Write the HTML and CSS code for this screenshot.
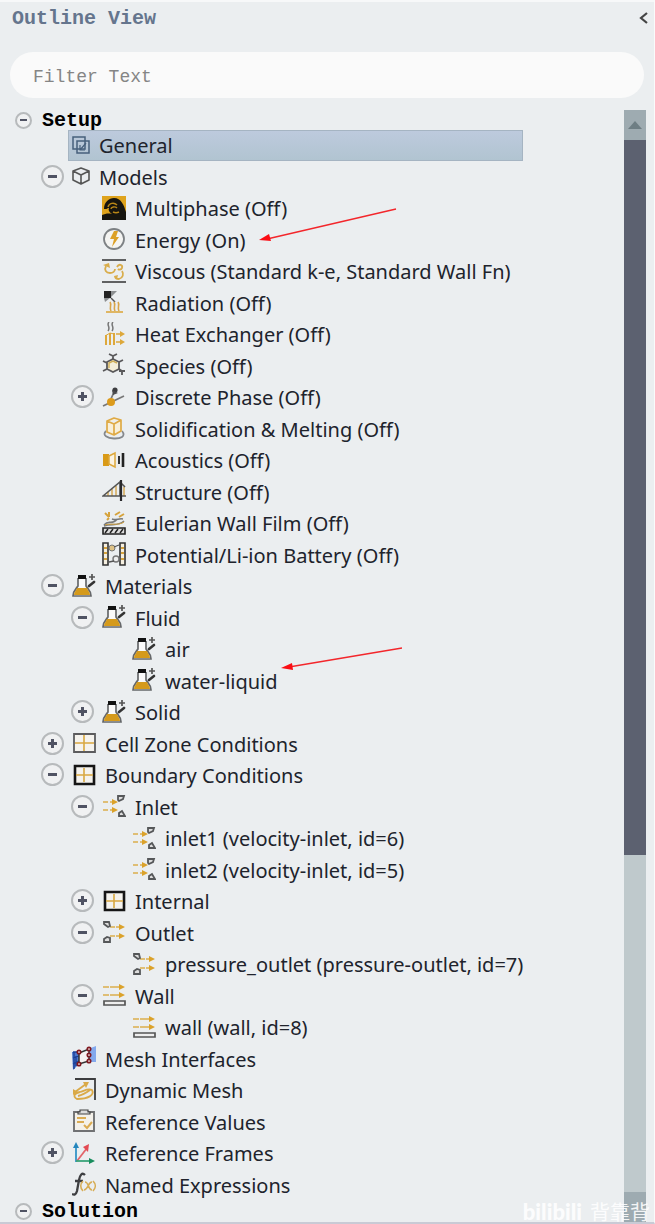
FILE: index.html
```html
<!DOCTYPE html>
<html lang="en">
<head>
 <meta charset="UTF-8">
 <meta name="viewport" content="width=device-width, initial-scale=1.0">
 <title>Outline View</title>
 <link rel="stylesheet" href="styles.css">
</head>
<body>

 <!-- Icon set -->
 <svg class="sprite" aria-hidden="true">
 <symbol id="general" viewBox="0 0 18 18"><path d="M5 13H1V1h12v4M5 5h12v12H5zM13 5v8H5" fill="none" stroke="#47607c" stroke-width="1.5"/><path d="M8 14l6-7M8 9v5h5" fill="none" stroke="#47607c" stroke-width="1.2"/></symbol>
 <symbol id="models" viewBox="0 0 18 18"><path d="M9 1l8 3v9l-8 4-8-4V4zM1 4l8 4 8-4M9 8v9" fill="none" stroke="#555" stroke-width="1.6" stroke-linejoin="round"/></symbol>
 <symbol id="multiphase" viewBox="0 0 24 24"><path d="M0 0h24v24H0z" fill="#dfa31c"/><path d="M2 13C2 6 7 2 12 2c7 0 10 7 12 14v8H0v-5c3-1 6-2 10-1-3-2-4-4-3-6H6c-1 1-2 1-4 1z" fill="#17150f"/><path d="M6 11c1-4 6-5 9-2M9 13c0-2 4-3 6-1M11 16c2 1 4 1 6 0" fill="none" stroke="#b98717" stroke-width="1.4"/></symbol>
 <symbol id="energy" viewBox="0 0 24 24"><circle cx="12" cy="12" r="10" fill="#f4f4f2" stroke="#7d8184" stroke-width="1.8"/><path d="M12 4h4l-2 6h3l-7 10 2-8H8z" fill="#dca026"/></symbol>
 <symbol id="viscous" viewBox="0 0 24 24"><path d="M0 1h24M0 23h24" stroke="#333" stroke-width="1.6"/><g fill="none" stroke="#d9ad4c" stroke-width="1.8"><path d="M4 7c-2 4 0 7 4 7 3 0 5-2 5-4M15 8c2-4 6-2 5 1-1 2-3 2-4 1M20 12c2 3 1 7-3 8-2 0-4-1-4-3"/></g><path d="M1 6l6-2 1 5zM12 17l4-1-1 4z" fill="#d9ad4c"/></symbol>
 <symbol id="radiation" viewBox="0 0 24 24"><path d="M2 1h7v7H2z" fill="#222"/><path d="M9 1h6L9 7zM2 8h6l-5 4z" fill="#8c8f91"/><path d="M9 8l4 4" stroke="#555" stroke-width="1.5"/><path d="M8 12c2 3-1 5 1 9M12 12c2 3-1 5 1 9M16 12c2 3-1 5 1 9" fill="none" stroke="#d9a548" stroke-width="1.6"/><path d="M4 22h17" stroke="#dfb663" stroke-width="2"/></symbol>
 <symbol id="heat" viewBox="0 0 24 24"><path d="M7 0c-3 3 2 5-1 9M11 0c-3 3 2 5-1 9" fill="none" stroke="#777" stroke-width="1.5"/><path d="M4 23V13M8 23V11M12 23V11" stroke="#dda83b" stroke-width="2"/><path d="M3 14l5-3 4 1" fill="none" stroke="#dda83b"/><path d="M14 12h6M14 20h6" stroke="#dda83b" stroke-width="1.6"/><path d="M18 9l5 3-5 3zM18 17l5 3-5 3z" fill="#dda83b"/></symbol>
 <symbol id="species" viewBox="0 0 24 24"><path d="M11 6l6 3v7l-6 3-6-3V9z" fill="#f4eed8" stroke="#59585a" stroke-width="1.8"/><path d="M7 15v-5l4-2 4 2" fill="none" stroke="#cfae58" stroke-width="1.4"/><path d="M11 6V3M7 1l4 2 4-2M1 8l4 2M1 18l4-2M17 16l3 2M17 9l4-2M17 18h6M20 18v4" fill="none" stroke="#59585a" stroke-width="1.8"/></symbol>
 <symbol id="discrete" viewBox="0 0 24 24"><path d="M1 21l21-10M8 16l5-11" stroke="#777" stroke-width="1.8"/><circle cx="13" cy="5" r="2.6" fill="#3c3d40"/><path d="M10 5l6 3-5 2z" fill="#4c4c4e"/><circle cx="9" cy="17" r="4" fill="#dc9b1c"/></symbol>
 <symbol id="solid" viewBox="0 0 24 24"><path d="M4 15c-9 9 25 11 16 0" fill="none" stroke="#85888c" stroke-width="1.8"/><path d="M5 5l7-3 7 2v11l-7 4-7-3zM5 5l7 3 7-4M12 8v11" fill="#f8efd9" stroke="#dfaa45" stroke-width="1.7" stroke-linejoin="round"/></symbol>
 <symbol id="acoustics" viewBox="0 0 24 24"><path d="M1 6h6v12H1z" fill="#d99a17"/><path d="M7 8l6-3v14l-6-3z" fill="#fbf3e2" stroke="#dda83b" stroke-width="1.5"/><path d="M17 8v8" stroke="#333" stroke-width="2"/><path d="M21 5v14" stroke="#222" stroke-width="2.6"/></symbol>
 <symbol id="structure" viewBox="0 0 24 24"><path d="M6 13v4M10 10v7M14 7v10M22 8v9" stroke="#d6ad60" stroke-width="1.6"/><path d="M1 17L18 3v14zM18 3l5 5M18 17h6" fill="none" stroke="#555" stroke-width="1.6"/><path d="M19 1v21" fill="none" stroke="#28282b" stroke-width="2.2"/></symbol>
 <symbol id="film" viewBox="0 0 24 24"><path d="M3 2l4 4M7 1v5M13 4l5-3M17 6l5-3M5 9l2-2" stroke="#d6a33d" stroke-width="2"/><path d="M2 14c5-6 8 1 13-6M2 15c7-3 14 1 20-5M10 8c5 2 6-1 11 0" fill="none" stroke="#77797b" stroke-width="1.6"/><path d="M3 14c6-2 13 1 19-3" stroke="#d6a33d" fill="none"/><path d="M1 17h22v6H1z" fill="#ddd" stroke="#222" stroke-width="1.6"/><path d="M3 22l3-4M8 22l3-4M13 22l3-4M18 22l3-4" stroke="#222" stroke-width="1.5"/></symbol>
 <symbol id="battery" viewBox="0 0 24 24"><path d="M1 1h5v22H1zM18 1h5v22h-5z" fill="#f5efe0" stroke="#333" stroke-width="1.6"/><path d="M2 6h3M2 11h3M2 17h3M19 6h3M19 11h3M19 17h3" stroke="#d6a33d" stroke-width="1.8"/><circle cx="10" cy="6" r="3" fill="#dec286" stroke="#777"/><circle cx="14" cy="17" r="3" fill="#eee" stroke="#777" stroke-width="1.4"/><path d="M12 5l5-2M7 20l5-1" stroke="#555" stroke-width="1.3"/></symbol>
 <symbol id="flask" viewBox="0 0 24 24"><path d="M6 4v8c-2 3-5 5-5 10h18c0-5-3-7-5-10V4" fill="#fafafa" stroke="#66686a" stroke-width="1.7"/><path d="M5 14h10c1 3 3 4 3 7H2c0-3 2-4 3-7z" fill="#d59a1b"/><path d="M6 1h8v4H6z" fill="#111"/><path d="M17 12l5-4" stroke="#333" stroke-width="2.6" stroke-linecap="round"/><path d="M17 3h6M20 0v6" stroke="#555" stroke-width="1.7"/></symbol>
 <symbol id="cell" viewBox="0 0 24 24"><path d="M2 3h21v18H2z" fill="#f5f3ee" stroke="#5c5c5e" stroke-width="1.8"/><path d="M12 4v16M3 12h19" stroke="#d9a840" stroke-width="1.6"/></symbol>
 <symbol id="boundary" viewBox="0 0 24 24"><path d="M3 3h19v18H3z" fill="#f5f3ee" stroke="#151515" stroke-width="2.6"/><path d="M12 5v14M4 12h17" stroke="#d9a840" stroke-width="1.6"/></symbol>
 <symbol id="inlet" viewBox="0 0 24 24"><path d="M1 8h5M8 8h4M1 16h5M8 16h4" stroke="#dcae4c" stroke-width="1.6"/><path d="M10 5l6 3-6 3zM10 13l6 3-6 3z" fill="#dba22b"/><path d="M16 2h6l-1 3-4 2-1-1zM17 22v-3l3-2 3 5z" fill="#ddd" stroke="#555759" stroke-width="1.8"/></symbol>
 <symbol id="outlet" viewBox="0 0 24 24"><path d="M8 7h5M14 7h5M8 16h5M14 16h5" stroke="#dcae4c" stroke-width="1.6"/><path d="M17 4l6 3-6 3zM17 13l6 3-6 3z" fill="#dba22b"/><path d="M2 2h5l1 4-2 1-4-3zM2 22v-3l3-2 3 1v4z" fill="#ddd" stroke="#555759" stroke-width="1.8"/></symbol>
 <symbol id="wall" viewBox="0 0 24 24"><path d="M1 4h6M8 4h10M1 12h6M8 12h10" stroke="#dcae4c" stroke-width="1.6"/><path d="M17 1l6 3-6 3zM17 9l6 3-6 3z" fill="#dba22b"/><path d="M2 18h21v4H2z" fill="#eee" stroke="#555" stroke-width="1.7"/></symbol>
 <symbol id="mesh" viewBox="0 0 24 24"><path d="M0 6h7v12l-6 6z" fill="#4a76cc"/><path d="M16 3l8-3v16h-7z" fill="#84a9ed"/><path d="M1 6h6M2 6v17M4 10v10M1 12l6-2M1 18l6-3" stroke="#1a3f96" stroke-width="1.3"/><path d="M7 7l10-4v12L7 18z" fill="#f6f1f1" stroke="#333" stroke-width="1.5"/><g fill="#fff" stroke="#7f1820" stroke-width="1.7"><circle cx="7" cy="6" r="1.7"/><circle cx="17" cy="3" r="1.7"/><circle cx="17" cy="9" r="1.7"/><circle cx="17" cy="15" r="1.7"/><circle cx="7" cy="18" r="1.7"/></g></symbol>
 <symbol id="dynamic" viewBox="0 0 24 24"><path d="M3 1h20v21" fill="none" stroke="#3d3d3f" stroke-width="1.8"/><path d="M3 14L14 6M5 21c-5-3-2-6 3-7 4-1 8-4 12-2 3 5-4 9-15 9zM6 18c5-1 8-3 12-6" fill="none" stroke="#daaa47" stroke-width="1.8"/><path d="M11 4h6l-3 6zM1 11l5 3-5 3z" fill="#daaa47"/></symbol>
 <symbol id="values" viewBox="0 0 24 24"><path d="M2 3h20v19H2z" fill="#f4f1ea" stroke="#707173" stroke-width="1.9"/><path d="M8 3V1h8v2h2v2H6V3z" fill="#ddd" stroke="#444" stroke-width="1.2"/><path d="M5 9h9M5 13h7M12 16l3 3 5-6" fill="none" stroke="#dbac53" stroke-width="2"/></symbol>
 <symbol id="frames" viewBox="0 0 24 24"><path d="M4 21V5" stroke="#3593c7" stroke-width="1.8"/><path d="M1 7l3-6 3 6z" fill="#2486bd"/><path d="M5 20L15 7" stroke="#e2656a" stroke-width="1.8"/><path d="M11 6l6-3-1 8z" fill="#e34a53"/><path d="M4 20h14" stroke="#39a379" stroke-width="1.8"/><path d="M17 17l6 3-6 3z" fill="#188d5d"/></symbol>
 <symbol id="fx" viewBox="0 0 24 24"><path d="M13 3c-3-3-5 0-6 5L5 19c-1 4-3 4-5 3M3 9h8" fill="none" stroke="#3e3f42" stroke-width="2.3"/><path d="M11 9c-3 3-3 7 0 10M21 9c3 3 3 7 0 10M13 10c4 0 3 8 7 8M20 10c-4 0-4 8-8 8" fill="none" stroke="#d7ad55" stroke-width="1.6"/></symbol>
 </svg>

 <header class="top">
 <h1>Outline View</h1>
 <button class="collapse" aria-label="Collapse"><svg viewBox="0 0 9 12"><path d="M8 1L2 6l6 5" fill="none" stroke="#444" stroke-width="2.2"/></svg></button>
 </header>

 <input class="filter" type="text" placeholder="Filter Text" aria-label="Filter Text">

 <main class="panel">
 <div class="tree">
 <h2><button class="toggle small" aria-label="Collapse Setup"></button>Setup</h2>
 <ul>
 <li class="selected"><svg class="icon small"><use href="#general"/></svg><span>General</span></li>
 <li><button class="toggle" aria-label="Collapse"></button><svg class="icon small"><use href="#models"/></svg>Models</li>
 <li class="lvl2 leaf"><svg class="icon"><use href="#multiphase"/></svg>Multiphase (Off)</li>
 <li class="lvl2 leaf"><svg class="icon"><use href="#energy"/></svg>Energy (On)
 <svg class="arrow first" viewBox="0 0 138 36"><path d="M137 1L8 31" stroke="#f3262b" stroke-width="1.3"/><path d="M0 32l10-6 2 7z" fill="#fb0d14"/></svg></li>
 <li class="lvl2 leaf"><svg class="icon"><use href="#viscous"/></svg>Viscous (Standard k-e, Standard Wall Fn)</li>
 <li class="lvl2 leaf"><svg class="icon"><use href="#radiation"/></svg>Radiation (Off)</li>
 <li class="lvl2 leaf"><svg class="icon"><use href="#heat"/></svg>Heat Exchanger (Off)</li>
 <li class="lvl2 leaf"><svg class="icon"><use href="#species"/></svg>Species (Off)</li>
 <li class="lvl2"><button class="toggle plus" aria-label="Expand"></button><svg class="icon"><use href="#discrete"/></svg>Discrete Phase (Off)</li>
 <li class="lvl2 leaf"><svg class="icon"><use href="#solid"/></svg>Solidification &amp; Melting (Off)</li>
 <li class="lvl2 leaf"><svg class="icon"><use href="#acoustics"/></svg>Acoustics (Off)</li>
 <li class="lvl2 leaf"><svg class="icon"><use href="#structure"/></svg>Structure (Off)</li>
 <li class="lvl2 leaf"><svg class="icon"><use href="#film"/></svg>Eulerian Wall Film (Off)</li>
 <li class="lvl2 leaf"><svg class="icon"><use href="#battery"/></svg>Potential/Li-ion Battery (Off)</li>
 <li><button class="toggle" aria-label="Collapse"></button><svg class="icon"><use href="#flask"/></svg>Materials</li>
 <li class="lvl2"><button class="toggle" aria-label="Collapse"></button><svg class="icon"><use href="#flask"/></svg>Fluid</li>
 <li class="lvl3 leaf"><svg class="icon"><use href="#flask"/></svg>air</li>
 <li class="lvl3 leaf"><svg class="icon"><use href="#flask"/></svg>water-liquid
 <svg class="arrow second" viewBox="0 0 122 26"><path d="M121 1L8 20" stroke="#f3262b" stroke-width="1.3"/><path d="M0 21l11-5 1 7z" fill="#fb0d14"/></svg></li>
 <li class="lvl2"><button class="toggle plus" aria-label="Expand"></button><svg class="icon"><use href="#flask"/></svg>Solid</li>
 <li><button class="toggle plus" aria-label="Expand"></button><svg class="icon"><use href="#cell"/></svg>Cell Zone Conditions</li>
 <li><button class="toggle" aria-label="Collapse"></button><svg class="icon"><use href="#boundary"/></svg>Boundary Conditions</li>
 <li class="lvl2"><button class="toggle" aria-label="Collapse"></button><svg class="icon"><use href="#inlet"/></svg>Inlet</li>
 <li class="lvl3 leaf"><svg class="icon"><use href="#inlet"/></svg>inlet1 (velocity-inlet, id=6)</li>
 <li class="lvl3 leaf"><svg class="icon"><use href="#inlet"/></svg>inlet2 (velocity-inlet, id=5)</li>
 <li class="lvl2"><button class="toggle plus" aria-label="Expand"></button><svg class="icon"><use href="#boundary"/></svg>Internal</li>
 <li class="lvl2"><button class="toggle" aria-label="Collapse"></button><svg class="icon"><use href="#outlet"/></svg>Outlet</li>
 <li class="lvl3 leaf"><svg class="icon"><use href="#outlet"/></svg>pressure_outlet (pressure-outlet, id=7)</li>
 <li class="lvl2"><button class="toggle" aria-label="Collapse"></button><svg class="icon"><use href="#wall"/></svg>Wall</li>
 <li class="lvl3 leaf"><svg class="icon"><use href="#wall"/></svg>wall (wall, id=8)</li>
 <li class="leaf"><svg class="icon"><use href="#mesh"/></svg>Mesh Interfaces</li>
 <li class="leaf"><svg class="icon"><use href="#dynamic"/></svg>Dynamic Mesh</li>
 <li class="leaf"><svg class="icon"><use href="#values"/></svg>Reference Values</li>
 <li><button class="toggle plus" aria-label="Expand"></button><svg class="icon"><use href="#frames"/></svg>Reference Frames</li>
 <li class="leaf"><svg class="icon"><use href="#fx"/></svg>Named Expressions</li>
 </ul>
 <h2><button class="toggle small" aria-label="Collapse Solution"></button>Solution</h2>
 </div>

 <div class="scrollbar">
 <button class="scroll-btn" aria-label="Scroll up"><svg viewBox="0 0 14 8"><path d="M0 8l7-8 7 8z" fill="#6e7e84"/></svg></button>
 <div class="thumb"></div>
 <div class="track"></div>
 <button class="scroll-btn" aria-label="Scroll down"></button>
 </div>
 </main>

 <div class="watermark"><span class="logo">bilibili</span><span>背靠背</span></div>

</body>
</html>
```
FILE: styles.css
```css
* {
box-sizing: border-box;
}

body {
position: relative;
display: flex;
flex-direction: column;
min-height: 100vh;
margin: 0;
background: #ebeef0;
border-top: 2px solid #f7f8f9;
border-right: 1px solid #fafafa;
border-bottom: 2px solid #c9cad5;
font-family: "Noto Sans", "Open Sans", sans-serif;
font-size: 20px;
color: #20232c;
}

button {
padding: 0;
border: none;
background: none;
cursor: pointer;
}

.sprite {
display: none;
}

/* Title bar */
.top {
display: flex;
align-items: center;
justify-content: space-between;
height: 32px;
padding: 0 6px 0 12px;
}

.top h1 {
margin: 0;
font: bold 20px "Liberation Mono", monospace;
color: #65758d;
}

.collapse svg {
display: block;
width: 9px;
height: 12px;
}

/* Filter box */
.filter {
height: 46px;
margin: 18px 10px 12px;
padding: 4px 23px 0;
border: none;
border-radius: 23px;
background: #fafafa;
font: 18px "Liberation Mono", monospace;
color: #777;
}

.filter::placeholder {
color: #858585;
opacity: 1;
}

/* Tree */
.panel {
display: flex;
flex: 1;
padding-right: 8px;
}

.tree {
flex: 1;
}

.tree h2 {
display: flex;
align-items: center;
gap: 10px;
height: 20px;
margin: 0;
padding-left: 15px;
font: bold 20px "Liberation Mono", monospace;
color: #000;
}

.tree ul {
margin: 0;
padding: 0;
list-style: none;
}

.tree li {
position: relative;
display: flex;
align-items: center;
height: 31px;
padding-left: 41px;
white-space: nowrap;
}

.tree li:nth-child(even) {
height: 32px;
}

.tree li.lvl2 { padding-left: 71px; }
.tree li.leaf { padding-left: 72px; }
.tree li.lvl2.leaf { padding-left: 102px; }
.tree li.lvl3.leaf { padding-left: 132px; }

.tree li.selected {
margin: 0 101px 0 68px;
padding-left: 3px;
border: 1px solid #a5b4c2;
background: linear-gradient(#bdcadd, #b1c4d1);
}

.icon {
flex: none;
width: 24px;
height: 24px;
margin: 0 9px 2px 0;
}

.icon.small {
width: 18px;
height: 18px;
}

/* Expand / collapse circles */
.toggle {
display: grid;
place-items: center;
flex: none;
width: 23px;
height: 23px;
margin: 0 8px 2px 0;
border: 2px solid #b7babc;
border-radius: 50%;
background: #f0f1f2;
}

.toggle::before, .toggle.plus::after {
content: "";
grid-area: 1 / 1;
width: 9px;
height: 3px;
background: #505363;
}

.toggle.plus::after {
width: 3px;
height: 9px;
}

.toggle.small {
width: 17px;
height: 17px;
margin: 0;
}

.toggle.small::before {
width: 7px;
height: 2px;
}

/* Red pointers */
.arrow {
position: absolute;
}

.arrow.first {
top: -16px;
left: 259px;
width: 138px;
height: 36px;
}

.arrow.second {
top: -18px;
left: 281px;
width: 122px;
height: 26px;
}

/* Scrollbar */
.scrollbar {
display: flex;
flex-direction: column;
width: 22px;
background: #bfc9cc;
}

.scroll-btn {
display: grid;
place-items: center;
height: 30px;
background: #9eabb1;
}

.scroll-btn svg {
width: 14px;
height: 8px;
}

.thumb {
flex: 68;
background: #5c6170;
}

.track {
flex: 32;
}

/* Watermark */
.watermark {
position: absolute;
right: 4px;
bottom: 0;
display: flex;
align-items: center;
gap: 8px;
font: 20px/20px "Noto Sans CJK SC", sans-serif;
color: rgba(255, 255, 255, 0.9);
pointer-events: none;
}

.watermark .logo {
font-family: Lato, sans-serif;
font-size: 22px;
font-weight: 900;
}
```
